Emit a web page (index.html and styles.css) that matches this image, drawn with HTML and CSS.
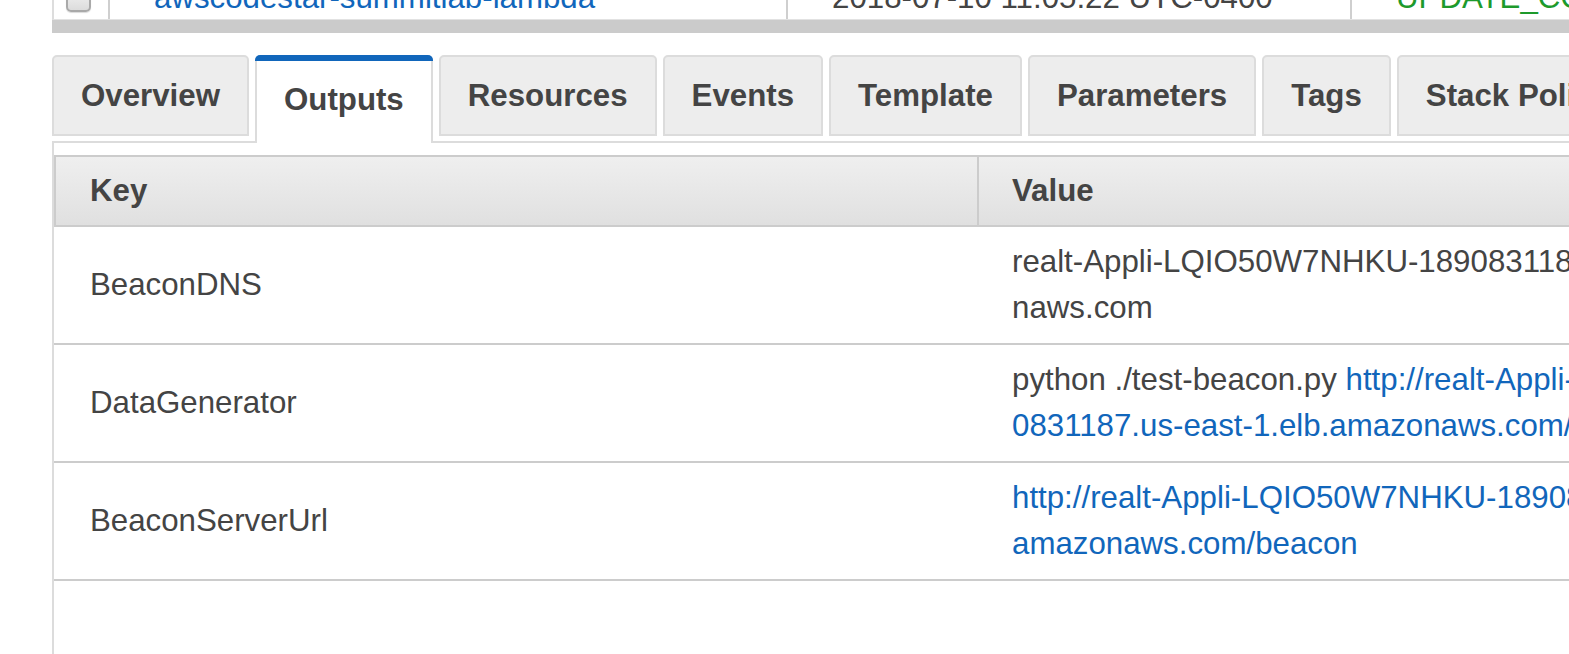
FILE: index.html
```html
<!DOCTYPE html>
<html lang="en">
<head>
<meta charset="utf-8">
<title>CloudFormation - Stack Outputs</title>
<link rel="stylesheet" href="styles.css">
</head>
<body>
<div class="page">
  <div class="stacks">
    <div class="stack-row">
      <div class="cell cb"><span class="checkbox"></span></div>
      <div class="cell name"><a class="link" href="#">awscodestar-summitlab-lambda</a></div>
      <div class="cell date">2018-07-10 11:05:22 UTC-0400</div>
      <div class="cell status">UPDATE_COMPLETE</div>
    </div>
    <div class="hbar"></div>
  </div>

  <div class="tabs">
    <div class="tab">Overview</div>
    <div class="tab active">Outputs</div>
    <div class="tab">Resources</div>
    <div class="tab">Events</div>
    <div class="tab">Template</div>
    <div class="tab">Parameters</div>
    <div class="tab">Tags</div>
    <div class="tab">Stack Policy</div>
  </div>

  <div class="panel">
    <div class="outputs">
      <div class="orow head">
        <div class="k">Key</div>
        <div class="v">Value</div>
      </div>
      <div class="orow">
        <div class="k">BeaconDNS</div>
        <div class="v"><span class="wrap">realt-Appli-LQIO50W7NHKU-1890831187.us-east-1.elb.amazo<br>naws.com</span></div>
      </div>
      <div class="orow">
        <div class="k">DataGenerator</div>
        <div class="v"><span class="wrap">python ./test-beacon.py <a class="link" href="#">http://realt-Appli-LQIO50W7NHKU-189<br>0831187.us-east-1.elb.amazonaws.com/beacon</a></span></div>
      </div>
      <div class="orow">
        <div class="k">BeaconServerUrl</div>
        <div class="v"><span class="wrap"><a class="link" href="#">http://realt-Appli-LQIO50W7NHKU-1890831187.us-east-1.elb.<br>amazonaws.com/beacon</a></span></div>
      </div>
    </div>
  </div>
</div>
</body>
</html>
```

FILE: styles.css
```css
html, body {
  margin: 0;
  padding: 0;
  background: #ffffff;
}

body {
  width: 1569px;
  height: 654px;
  overflow: hidden;
  font-family: "Liberation Sans", Arial, sans-serif;
  font-size: 31.25px;
  color: #444444;
}

.page {
  margin-left: 52px;
  width: 2600px;
}

.link {
  color: #1166bb;
  text-decoration: none;
}

/* stack list (cut off at top) */
.stacks {
  margin-top: -30px;
}

.stack-row {
  display: grid;
  grid-template-columns: 54px 678px 564px 1fr;
  height: 49px;
  border-left: 2px solid #dddddd;
  border-bottom: 1px solid #e2e2e2;
}

.cell {
  display: flex;
  align-items: flex-end;
  padding-bottom: 3px;
  line-height: 36px;
  white-space: nowrap;
}

.cell.cb {
  padding-left: 12px;
  padding-bottom: 7px;
}

.checkbox {
  display: block;
  width: 21px;
  height: 21px;
  border: 2px solid #a9a9a9;
  border-radius: 5px;
  background: linear-gradient(#f4f4f4, #dcdcdc);
  box-shadow: 0 1px 1px rgba(0, 0, 0, 0.15);
}

.cell.name,
.cell.date,
.cell.status {
  border-left: 2px solid #cfcfcf;
  padding-left: 44px;
}

.cell.status {
  color: #1d9a2c;
}

.hbar {
  height: 13px;
  background: #cbcbcb;
}

/* tabs */
.tabs {
  display: flex;
  align-items: flex-start;
  gap: 6px;
  margin-top: 22px;
  margin-bottom: -2px;
  white-space: nowrap;
}

.tab {
  box-sizing: border-box;
  height: 81px;
  padding: 0 27px;
  border: 2px solid #dcdcdc;
  border-radius: 5px 5px 0 0;
  background: #ededed;
  font-weight: bold;
  display: flex;
  align-items: center;
  line-height: 36px;
}

.tab.active {
  position: relative;
  z-index: 1;
  height: 88px;
  background: #ffffff;
  border-top: 0;
  border-bottom: 0;
  border-radius: 6px 6px 0 0;
  flex-direction: column;
  justify-content: flex-start;
  line-height: 77px;
}

.tab.active::before {
  content: "";
  display: block;
  align-self: stretch;
  height: 6px;
  margin: 0 -29px;
  background: #1166bb;
  border-radius: 5px 5px 0 0;
}

/* panel */
.panel {
  border-top: 2px solid #dcdcdc;
  border-left: 2px solid #dcdcdc;
  padding-top: 12px;
  height: 560px;
}

.outputs {
  width: 2400px;
}

.orow {
  display: grid;
  grid-template-columns: 923px 1fr;
  border-bottom: 2px solid #cccccc;
}

.orow .k,
.orow .v {
  display: flex;
  align-items: center;
  padding: 12px 0;
  line-height: 46px;
  white-space: nowrap;
}

.orow .k {
  padding-left: 36px;
}

.orow .v {
  padding-left: 35px;
}

.wrap {
  display: block;
}

.orow.head {
  grid-template-columns: 921px 1fr;
  border: 2px solid #cccccc;
  background: linear-gradient(#efefef, #e0e0e0);
  font-weight: bold;
}

.orow.head .k,
.orow.head .v {
  height: 68px;
  padding-top: 0;
  padding-bottom: 0;
  box-sizing: border-box;
}

.orow.head .k {
  padding-left: 34px;
}

.orow.head .v {
  border-left: 2px solid #cccccc;
  padding-left: 33px;
}
```
